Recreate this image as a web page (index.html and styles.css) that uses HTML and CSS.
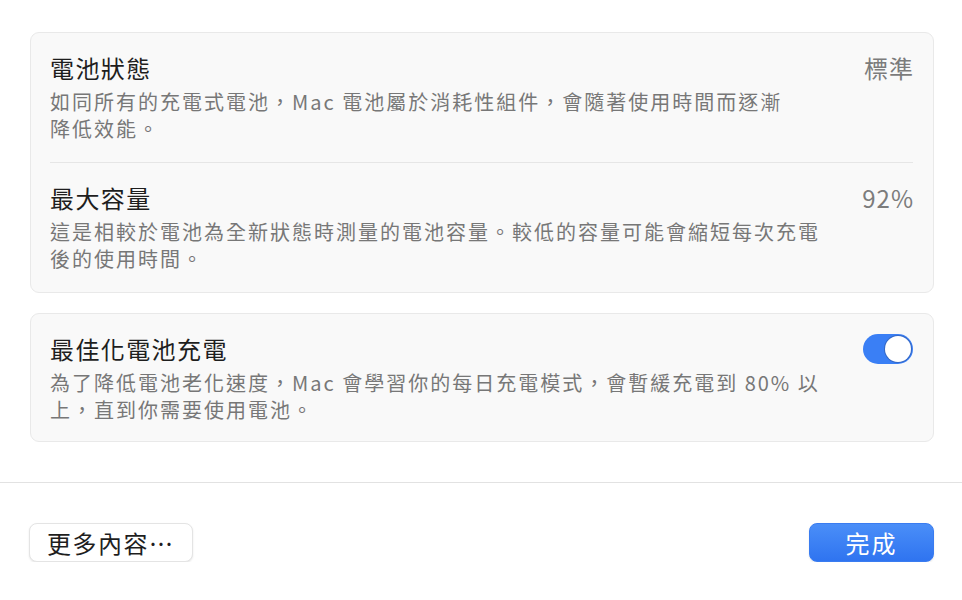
FILE: index.html
```html
<!DOCTYPE html>
<html lang="zh-Hant">
<head>
  <meta charset="UTF-8">
  <title>電池健康度</title>
  <link rel="stylesheet" href="styles.css">
</head>
<body>
  <div class="content">
    <div class="card">
      <div class="row">
        <div class="text">
          <div class="title">電池狀態</div>
          <div class="desc">如同所有的充電式電池，Mac 電池屬於消耗性組件，會隨著使用時間而逐漸<br>降低效能。</div>
        </div>
        <div class="value">標準</div>
      </div>
      <div class="row">
        <div class="text">
          <div class="title">最大容量</div>
          <div class="desc">這是相較於電池為全新狀態時測量的電池容量。較低的容量可能會縮短每次充電<br>後的使用時間。</div>
        </div>
        <div class="value">92%</div>
      </div>
    </div>

    <div class="card">
      <div class="row short">
        <div class="text">
          <div class="title">最佳化電池充電</div>
          <div class="desc">為了降低電池老化速度，Mac 會學習你的每日充電模式，會暫緩充電到 80% 以<br>上，直到你需要使用電池。</div>
        </div>
        <div class="toggle on"><span class="knob"></span></div>
      </div>
    </div>
  </div>

  <div class="footer">
    <button class="btn">更多內容⋯</button>
    <button class="btn primary">完成</button>
  </div>
</body>
</html>
```

FILE: styles.css
```css
body {
  margin: 0;
  background: #ffffff;
  font-family: "Noto Sans CJK TC", "Inter", sans-serif;
  color: #262626;
}
.content {
  padding: 32px 28px 40px 30px;
  display: flex;
  flex-direction: column;
  gap: 20px;
}
.card {
  background: #f9f9f9;
  border: 1px solid #e9e9e9;
  border-radius: 9px;
}
.row {
  display: flex;
  justify-content: space-between;
  align-items: flex-start;
  margin: 0 20px 0 19px;
  padding: 20px 0;
  border-bottom: 1px solid #e6e6e6;
}
.row:last-child {
  border-bottom: none;
}
.row.short {
  padding-bottom: 18px;
}
.text {
  flex: 1;
  min-width: 0;
}
.title {
  font-size: 24px;
  line-height: 30px;
  letter-spacing: 1.4px;
  color: #1e1e1e;
  margin-bottom: 5px;
}
.desc {
  font-size: 20px;
  line-height: 27px;
  letter-spacing: 2px;
  color: #777777;
  white-space: nowrap;
}
.value {
  font-size: 24px;
  line-height: 30px;
  letter-spacing: 1px;
  color: #7c7c7c;
  margin-right: -1px;
}
.toggle {
  width: 50px;
  height: 30px;
  border-radius: 15px;
  background: #d9d9d9;
  display: flex;
  align-items: center;
  padding: 0 2px;
  box-sizing: border-box;
}
.toggle.on {
  background: #3a7ff5;
  justify-content: flex-end;
}
.knob {
  width: 26px;
  height: 26px;
  border-radius: 50%;
  background: #ffffff;
  box-shadow: 0 0 0 1px rgba(40, 60, 110, 0.35);
}
.footer {
  border-top: 1px solid #e2e2e2;
  padding: 40px 28px 0 29px;
  display: flex;
  justify-content: space-between;
}
.btn {
  height: 39px;
  padding: 0 17px;
  font-family: "Noto Sans CJK TC", "Inter", sans-serif;
  font-size: 24px;
  letter-spacing: 1.5px;
  color: #1e1e1e;
  background: #ffffff;
  border: 1px solid #e4e4e4;
  border-radius: 8px;
  box-shadow: 0 1px 2px rgba(0, 0, 0, 0.1);
}
.btn.primary {
  width: 125px;
  color: #ffffff;
  background: linear-gradient(#4a8ef8, #2f74f0);
  border: 1px solid #3a7cf0;
  letter-spacing: 2px;
}
```
